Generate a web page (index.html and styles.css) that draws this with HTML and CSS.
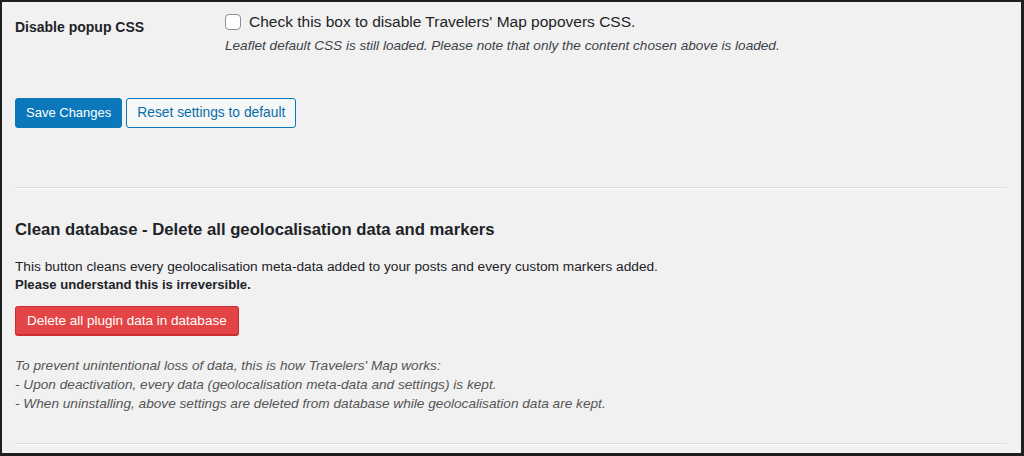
FILE: index.html
```html
<!DOCTYPE html>
<html>
<head>
<meta charset="utf-8">
<link rel="stylesheet" href="styles.css">
</head>
<body>
<div class="frame">
  <div class="form-row">
    <div class="label">Disable popup CSS</div>
    <div class="field">
      <label class="check-line"><span class="checkbox"></span><span>Check this box to disable Travelers' Map popovers CSS.</span></label>
      <p class="description">Leaflet default CSS is still loaded. Please note that only the content chosen above is loaded.</p>
    </div>
  </div>
  <div class="actions">
    <button class="btn btn-primary">Save Changes</button>
    <button class="btn btn-secondary">Reset settings to default</button>
  </div>
  <hr class="sep">
  <h2 class="title">Clean database - Delete all geolocalisation data and markers</h2>
  <p class="text">This button cleans every geolocalisation meta-data added to your posts and every custom markers added.<br><strong class="warn">Please understand this is irreversible.</strong></p>
  <button class="btn btn-danger">Delete all plugin data in database</button>
  <p class="note">To prevent unintentional loss of data, this is how Travelers' Map works:<br>- Upon deactivation, every data (geolocalisation meta-data and settings) is kept.<br>- When uninstalling, above settings are deleted from database while geolocalisation data are kept.</p>
  <hr class="sep sep-bottom">
</div>
</body>
</html>
```
FILE: styles.css
```css
html, body {
  margin: 0;
  padding: 0;
}
body {
  font-family: "Liberation Sans", Arial, sans-serif;
  color: #1d2327;
  background: #222;
}
.frame {
  box-sizing: border-box;
  width: 1024px;
  height: 456px;
  background: #f1f1f1;
  border-style: solid;
  border-color: #1f1f1f;
  border-width: 2px 3px 3px 2px;
  padding: 10px 14px 0 13px;
  overflow: hidden;
}
.form-row {
  display: grid;
  grid-template-columns: 210px 1fr;
}
.label {
  font-size: 14px;
  font-weight: 700;
  line-height: 18px;
  padding-top: 6px;
}
.check-line {
  display: flex;
  align-items: center;
  gap: 8px;
  font-size: 15.5px;
  line-height: 20px;
  height: 20px;
}
.checkbox {
  box-sizing: border-box;
  width: 16px;
  height: 16px;
  border: 1px solid #8c8f94;
  border-radius: 4px;
  background: #fff;
  flex: none;
}
.description {
  margin: 4px 0 0;
  font-size: 13.6px;
  line-height: 19px;
  font-style: italic;
  color: #3c434a;
}
.actions {
  display: flex;
  gap: 4px;
  margin-top: 43px;
}
.btn {
  box-sizing: border-box;
  height: 30px;
  padding: 0 10px;
  font-family: inherit;
  font-size: 13.5px;
  line-height: 28px;
  border-radius: 3px;
  border: 1px solid;
  cursor: pointer;
}
.btn-primary {
  background: #0a78ba;
  border-color: #0a78ba;
  color: #fff;
  font-size: 13px;
}
.btn-secondary {
  background: #f6f7f7;
  border-color: #0a78ba;
  color: #0a6ea8;
  font-size: 13.8px;
}
.sep {
  border: 0;
  border-top: 1px solid #dcdcdc;
  border-bottom: 1px solid #f9f9f9;
  margin: 59px 0 0;
  height: 0;
}
.title {
  margin: 29px 0 0;
  font-size: 16.7px;
  font-weight: 700;
  line-height: 23px;
}
.text {
  margin: 17px 0 0;
  font-size: 13.7px;
  line-height: 18px;
}
.warn {
  font-size: 13.1px;
}
.btn-danger {
  display: block;
  margin-top: 12px;
  background: #e34546;
  border-color: #c9302f;
  border-bottom-width: 2px;
  color: #fff;
  padding: 0 11px;
  font-size: 13.5px;
}
.note {
  margin: 20px 0 0;
  font-size: 13.65px;
  line-height: 19px;
  font-style: italic;
  color: #555;
}
.sep-bottom {
  margin-top: 30px;
}
```
